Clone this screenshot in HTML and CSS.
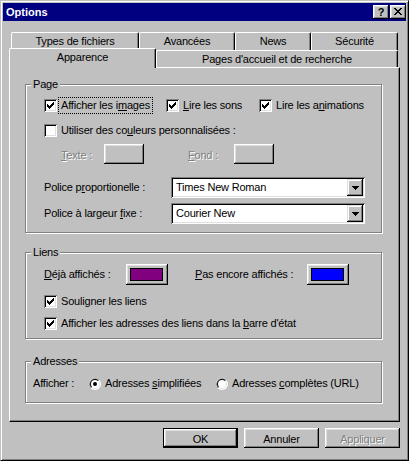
FILE: index.html
```html
<!DOCTYPE html>
<html lang="fr">
<head>
<meta charset="utf-8">
<title>Options</title>
<link rel="stylesheet" href="styles.css">
</head>
<body>
<div class="window">
  <div class="titlebar">
    <span class="title">Options</span>
    <div class="cbtns">
      <span class="cbtn help">?</span>
      <span class="cbtn close"><svg width="8" height="7" viewBox="0 0 8 7" shape-rendering="crispEdges"><path d="M0 0h2v1h-2zM6 0h2v1h-2zM1 1h2v1h-2zM5 1h2v1h-2zM2 2h4v1h-4zM3 3h2v1h-2zM2 4h4v1h-4zM1 5h2v1h-2zM5 5h2v1h-2zM0 6h2v1h-2zM6 6h2v1h-2z"/></svg></span>
    </div>
  </div>
  <div class="client">
    <div class="tabs">
      <div class="tabrow back">
        <div class="tab w-types">Types de fichiers</div>
        <div class="tab w-avancees">Avancées</div>
        <div class="tab w-news">News</div>
        <div class="tab w-secu">Sécurité</div>
      </div>
      <div class="tabrow front">
        <div class="tab sel w-app">Apparence</div>
        <div class="tab w-pages">Pages d'accueil et de recherche</div>
      </div>
    </div>
    <div class="panel">
      <div class="group g-page">
        <span class="legend">Page</span>
        <div class="row r-checks">
          <div class="chk"><span class="cb"><svg width="7" height="7" viewBox="0 0 7 7" shape-rendering="crispEdges"><path d="M6 0h1v1h-1zM5 1h2v1h-2zM0 2h1v1h-1zM4 2h3v1h-3zM0 3h2v1h-2zM3 3h3v1h-3zM0 4h5v1h-5zM1 5h3v1h-3zM2 6h1v1h-1z"/></svg></span><span class="focus">Afficher les i<u>m</u>ages</span></div>
          <div class="chk"><span class="cb"><svg width="7" height="7" viewBox="0 0 7 7" shape-rendering="crispEdges"><path d="M6 0h1v1h-1zM5 1h2v1h-2zM0 2h1v1h-1zM4 2h3v1h-3zM0 3h2v1h-2zM3 3h3v1h-3zM0 4h5v1h-5zM1 5h3v1h-3zM2 6h1v1h-1z"/></svg></span><span><u>L</u>ire les sons</span></div>
          <div class="chk"><span class="cb"><svg width="7" height="7" viewBox="0 0 7 7" shape-rendering="crispEdges"><path d="M6 0h1v1h-1zM5 1h2v1h-2zM0 2h1v1h-1zM4 2h3v1h-3zM0 3h2v1h-2zM3 3h3v1h-3zM0 4h5v1h-5zM1 5h3v1h-3zM2 6h1v1h-1z"/></svg></span><span>Lire les a<u>n</u>imations</span></div>
        </div>
        <div class="row r-custom">
          <div class="chk"><span class="cb"></span><span>Utiliser des co<u>u</u>leurs personnalisées :</span></div>
        </div>
        <div class="row r-colors">
          <span class="dis l-texte"><u>T</u>exte :</span>
          <span class="dbox raised"></span>
          <span class="dis l-fond"><u>F</u>ond :</span>
          <span class="dbox raised"></span>
        </div>
        <div class="row r-font first">
          <span class="l-font">Police p<u>r</u>oportionelle :</span>
          <div class="combo"><span class="ctext">Times New Roman</span><span class="cdrop"><svg width="7" height="4" viewBox="0 0 7 4" shape-rendering="crispEdges"><path d="M0 0h7v1h-7zM1 1h5v1h-5zM2 2h3v1h-3zM3 3h1v1h-1z"/></svg></span></div>
        </div>
        <div class="row r-font second">
          <span class="l-font">Police à largeur <u>f</u>ixe :</span>
          <div class="combo"><span class="ctext">Courier New</span><span class="cdrop"><svg width="7" height="4" viewBox="0 0 7 4" shape-rendering="crispEdges"><path d="M0 0h7v1h-7zM1 1h5v1h-5zM2 2h3v1h-3zM3 3h1v1h-1z"/></svg></span></div>
        </div>
      </div>

      <div class="group g-liens">
        <span class="legend">Liens</span>
        <div class="row r-linkcolors">
          <span class="l-deja"><u>D</u>éjà affichés :</span>
          <span class="swbtn raised"><span class="swatch sw-visited"></span></span>
          <span class="l-pas"><u>P</u>as encore affichés :</span>
          <span class="swbtn raised"><span class="swatch sw-new"></span></span>
        </div>
        <div class="row r-under">
          <div class="chk"><span class="cb"><svg width="7" height="7" viewBox="0 0 7 7" shape-rendering="crispEdges"><path d="M6 0h1v1h-1zM5 1h2v1h-2zM0 2h1v1h-1zM4 2h3v1h-3zM0 3h2v1h-2zM3 3h3v1h-3zM0 4h5v1h-5zM1 5h3v1h-3zM2 6h1v1h-1z"/></svg></span><span>Souligner les liens</span></div>
        </div>
        <div class="row r-status">
          <div class="chk"><span class="cb"><svg width="7" height="7" viewBox="0 0 7 7" shape-rendering="crispEdges"><path d="M6 0h1v1h-1zM5 1h2v1h-2zM0 2h1v1h-1zM4 2h3v1h-3zM0 3h2v1h-2zM3 3h3v1h-3zM0 4h5v1h-5zM1 5h3v1h-3zM2 6h1v1h-1z"/></svg></span><span>Afficher les adresses des liens dans la <u>b</u>arre d'état</span></div>
        </div>
      </div>

      <div class="group g-adr">
        <span class="legend">Adresses</span>
        <div class="row r-adr">
          <span class="l-show">Afficher :</span>
          <div class="rad r-simple"><svg class="rb" width="12" height="12" viewBox="0 0 12 12"><circle cx="6" cy="6" r="6" fill="#fff"/><path d="M1.76 10.24A6 6 0 0 1 10.24 1.76Z" fill="#808080"/><circle cx="6" cy="6" r="5" fill="#dfdfdf"/><path d="M2.46 9.54A5 5 0 0 1 9.54 2.46Z" fill="#000"/><circle cx="6" cy="6" r="4" fill="#fff"/><circle cx="6" cy="6" r="2" fill="#000"/></svg><span>Adresses <u>s</u>implifiées</span></div>
          <div class="rad"><svg class="rb" width="12" height="12" viewBox="0 0 12 12"><circle cx="6" cy="6" r="6" fill="#fff"/><path d="M1.76 10.24A6 6 0 0 1 10.24 1.76Z" fill="#808080"/><circle cx="6" cy="6" r="5" fill="#dfdfdf"/><path d="M2.46 9.54A5 5 0 0 1 9.54 2.46Z" fill="#000"/><circle cx="6" cy="6" r="4" fill="#fff"/></svg><span>Adresses <u>c</u>omplètes (URL)</span></div>
        </div>
      </div>
    </div>
    <div class="btnrow">
      <span class="btn default">OK</span>
      <span class="btn raised">Annuler</span>
      <span class="btn raised disabled">Appliquer</span>
    </div>
  </div>
</div>
</body>
</html>
```
FILE: styles.css
```css
* { box-sizing: border-box; }
html, body { margin: 0; padding: 0; }
body {
  width: 409px;
  height: 461px;
  background: #c0c0c0;
  font-family: "Liberation Sans", Arial, sans-serif;
  font-size: 11px;
  line-height: 13px;
  letter-spacing: -0.2px;
  color: #000;
}
u { text-underline-offset: 1px; }

.raised {
  box-shadow: inset -1px -1px #000, inset 1px 1px #fff, inset -2px -2px #808080, inset 2px 2px #dfdfdf;
}

.window {
  width: 409px;
  height: 461px;
  border: 1px solid;
  border-color: #c0c0c0 #000 #000 #c0c0c0;
  box-shadow: inset 1px 1px #fff, inset -1px -1px #808080;
  padding: 2px;
  display: flex;
  flex-direction: column;
  background: #c0c0c0;
}

.titlebar {
  height: 18px;
  background: #000080;
  display: flex;
  align-items: center;
  padding: 0 0 0 3px;
}
.title { color: #fff; font-weight: bold; flex: 1; letter-spacing: 0; }
.cbtns { display: flex; gap: 1px; }
.cbtn {
  width: 16px;
  height: 14px;
  background: #c0c0c0;
  box-shadow: inset -1px -1px #000, inset 1px 1px #fff, inset -2px -2px #808080, inset 2px 2px #dfdfdf;
  display: flex;
  align-items: center;
  justify-content: center;
}
.cbtn.help { font-weight: bold; font-size: 11px; line-height: 12px; padding-bottom: 1px; }
.cbtn.close svg { display: block; margin: 0 1px 1px 0; }

.client {
  flex: 1;
  padding: 11px 6px 0 6px;
  display: flex;
  flex-direction: column;
}

.tabrow { display: flex; }
.tabrow.back { height: 18px; padding-left: 2px; }
.tabrow.front { height: 17px; }
.tab {
  height: 100%;
  background: #c0c0c0;
  border-top: 1px solid #fff;
  border-left: 1px solid #fff;
  border-right: 1px solid #000;
  border-radius: 2px 2px 0 0;
  box-shadow: inset -1px 0 #808080;
  text-align: center;
  padding-top: 2px;
  white-space: nowrap;
}
.tab.sel {
  height: 20px;
  margin-top: -2px;
  position: relative;
  z-index: 1;
}
.w-types { width: 128px; }
.w-avancees { width: 96px; }
.w-news { width: 76px; }
.w-secu { width: 87px; }
.w-app { width: 147px; }
.w-pages { width: 242px; }

.panel {
  height: 355px;
  border: 1px solid;
  border-color: #fff #000 #000 #fff;
  box-shadow: inset -1px -1px #808080;
  padding: 16px 17px 18px 15px;
  display: flex;
  flex-direction: column;
}

.group {
  border: 1px solid #808080;
  box-shadow: 1px 1px 0 #fff, inset 1px 1px 0 #fff;
  display: flex;
  flex-direction: column;
  align-items: flex-start;
  padding-left: 18px;
}
.legend {
  margin-top: -7px;
  margin-left: -13px;
  padding: 0 2px;
  background: #c0c0c0;
  line-height: 13px;
}
.g-page { height: 149px; }
.g-liens { height: 87px; margin-top: 19px; }
.g-adr { height: 42px; margin-top: 22px; padding-left: 7px; }
.g-adr .legend { margin-left: -2px; }

.row { display: flex; align-items: center; white-space: nowrap; }

.chk { display: flex; align-items: center; gap: 4px; height: 13px; }
.cb {
  width: 13px;
  height: 13px;
  flex: none;
  padding: 3px;
  background: #fff;
  box-shadow: inset 1px 1px #808080, inset -1px -1px #fff, inset 2px 2px #000, inset -2px -2px #dfdfdf;
}
.cb svg { display: block; }
.focus { outline: 1px dotted #000; outline-offset: 1px; padding: 0 1px; margin-left: -1px; }

.r-checks { display: grid; grid-template-columns: 122px 93px auto; margin-top: 8px; }
.r-custom { margin-top: 12px; }
.r-colors { margin-top: 7px; padding-left: 17px; height: 20px; }
.dis { color: #808080; text-shadow: 1px 1px 0 #fff; }
.l-texte { width: 43px; padding-top: 2px; }
.l-fond { width: 46px; margin-left: 44px; padding-top: 2px; }
.dbox { width: 40px; height: 20px; background: #c0c0c0; }

.r-font.first { margin-top: 13px; }
.r-font.second { margin-top: 5px; }
.l-font { width: 127px; }
.combo {
  width: 194px;
  height: 21px;
  background: #fff;
  box-shadow: inset 1px 1px #808080, inset -1px -1px #fff, inset 2px 2px #000, inset -2px -2px #dfdfdf;
  padding: 2px;
  display: flex;
  align-items: center;
}
.ctext { flex: 1; padding-left: 3px; }
.cdrop {
  width: 16px;
  height: 17px;
  background: #c0c0c0;
  box-shadow: inset -1px -1px #000, inset 1px 1px #dfdfdf, inset -2px -2px #808080, inset 2px 2px #fff;
  display: flex;
  align-items: center;
  justify-content: center;
}
.cdrop svg { display: block; margin: 1px 0 0 0; }

.r-linkcolors { margin-top: 5px; height: 21px; }
.l-deja { width: 82px; }
.l-pas { width: 112px; margin-left: 27px; }
.swbtn { width: 42px; height: 21px; padding: 4px 5px 4px 4px; background: #c0c0c0; }
.swatch { display: block; width: 33px; height: 13px; border: 1px solid #000; }
.sw-visited { background: #800080; }
.sw-new { background: #0000ff; }
.r-under { margin-top: 10px; }
.r-status { margin-top: 9px; }

.r-adr { margin-top: 9px; height: 13px; }
.l-show { width: 56px; }
.rad { display: flex; align-items: center; gap: 4px; }
.r-simple { width: 127px; }
.rb { display: block; flex: none; }

.btnrow {
  display: flex;
  justify-content: flex-end;
  gap: 6px;
  margin-top: 6px;
}
.btn {
  width: 75px;
  height: 20px;
  text-align: center;
  padding-top: 5px;
  background: #c0c0c0;
}
.btn.default {
  border: 1px solid #000;
  padding-top: 4px;
  box-shadow: inset -1px -1px #000, inset 1px 1px #fff, inset -2px -2px #808080, inset 2px 2px #dfdfdf;
}
.btn.disabled { color: #808080; text-shadow: 1px 1px 0 #fff; }
```
